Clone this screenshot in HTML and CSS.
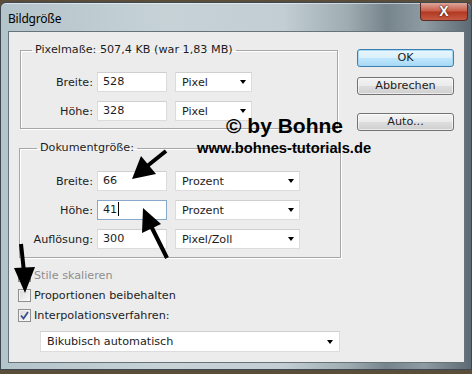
FILE: index.html
```html
<!DOCTYPE html>
<html lang="de">
<head>
<meta charset="UTF-8" />
<title>Bildgröße</title>
<link rel="stylesheet" href="styles.css">
</head>
<body>

<!-- Dialog window -->
<div class="window">
  <div class="titlebar">
    <span class="title">Bildgröße</span>
    <div class="close" aria-label="Schließen">X</div>
  </div>

  <div class="client">
    <div class="left">
      <fieldset class="group g1">
        <legend>Pixelmaße: 507,4 KB (war 1,83 MB)</legend>
        <div class="row">
          <span class="label">Breite:</span>
          <div class="field">528</div>
          <div class="select s-short"><span>Pixel</span><span class="caret"></span></div>
        </div>
        <div class="row">
          <span class="label">Höhe:</span>
          <div class="field">328</div>
          <div class="select s-short"><span>Pixel</span><span class="caret"></span></div>
        </div>
      </fieldset>

      <fieldset class="group g2">
        <legend>Dokumentgröße:</legend>
        <div class="row">
          <span class="label">Breite:</span>
          <div class="field">66</div>
          <div class="select s-long"><span>Prozent</span><span class="caret"></span></div>
        </div>
        <div class="row">
          <span class="label">Höhe:</span>
          <div class="field focus">41<span class="cursor"></span></div>
          <div class="select s-long"><span>Prozent</span><span class="caret"></span></div>
        </div>
        <div class="row">
          <span class="label">Auflösung:</span>
          <div class="field">300</div>
          <div class="select s-long"><span>Pixel/Zoll</span><span class="caret"></span></div>
        </div>
      </fieldset>

      <div class="checks">
        <div class="check disabled"><span class="box"></span>Stile skalieren</div>
        <div class="check"><span class="box"></span>Proportionen beibehalten</div>
        <div class="check"><span class="box checked">
          <svg width="11" height="11" viewBox="0 0 11 11"><path d="M2 5.5 L4.5 8.5 L9 2" fill="none" stroke="#3a4f8f" stroke-width="1.8"/></svg>
        </span>Interpolationsverfahren:</div>
      </div>

      <div class="select s-wide"><span>Bikubisch automatisch</span><span class="caret"></span></div>
    </div>

    <div class="buttons">
      <div class="btn default">OK</div>
      <div class="btn">Abbrechen</div>
      <div class="btn auto">Auto...</div>
    </div>
  </div>
</div>

<!-- Watermark and arrows over the dialog -->
<div class="mark-big">© by Bohne</div>
<div class="mark-url">www.bohnes-tutorials.de</div>
<svg class="arrows" width="472" height="374" viewBox="0 0 472 374">
  <line x1="166" y1="151" x2="146" y2="167" stroke="#000" stroke-width="4"/>
  <polygon points="132,179 141,156 156,174" fill="#000"/>
  <line x1="167" y1="258" x2="151" y2="226" stroke="#000" stroke-width="4"/>
  <polygon points="143,208 161,224 142,233" fill="#000"/>
  <line x1="21" y1="244" x2="24" y2="272" stroke="#000" stroke-width="4"/>
  <polygon points="25,293 14,268 35,267" fill="#000"/>
</svg>

</body>
</html>
```

FILE: styles.css
```css
* { box-sizing: border-box; }
body {
  margin: 0;
  width: 472px;
  height: 374px;
  overflow: hidden;
  position: relative;
  background: #5a4e3a;
  font-family: 'DejaVu Sans', Tahoma, sans-serif;
  font-size: 11.2px;
  color: #1c1c1c;
}

/* Window frame */
.window {
  margin-top: 2px;
  width: 472px;
  height: 368px;
  padding: 0 6px 6px 7px;
  border: 1px solid #3d4750;
  border-radius: 6px 6px 0 0;
  display: flex;
  flex-direction: column;
  background: linear-gradient(90deg, #b4c4cb 0%, #c6d2d6 35%, #c2ced3 60%, #9eabb1 74%, #76848c 82%, #8e9ba2 90%, #5d6a73 100%);
  box-shadow: inset 0 1px 0 rgba(255,255,255,0.5);
}
.titlebar {
  height: 28px;
  display: flex;
  justify-content: space-between;
  align-items: flex-start;
  margin-right: -3px;
}
.title {
  font-family: 'Noto Sans', sans-serif;
  font-size: 12px;
  color: #000;
  margin-top: 7px;
  letter-spacing: -0.2px;
}
.close {
  width: 48px;
  height: 18px;
  border: 1px solid #5b2a22;
  border-top: none;
  border-radius: 0 0 4px 4px;
  background: linear-gradient(#dca79b 0%, #c9604c 45%, #b23a24 55%, #c65a44 100%);
  color: #fff;
  font-family: 'Liberation Sans', sans-serif;
  font-weight: bold;
  font-size: 14px;
  line-height: 17px;
  text-align: center;
  text-shadow: 0 0 2px #3b1008, 0 0 1px #3b1008;
}

/* Client area */
.client {
  flex: 1;
  display: flex;
  align-items: flex-start;
  padding: 11px 0 0 11px;
  background: #ececec;
  border: 1px solid #66737b;
}
.left {
  width: 320px;
}

.group {
  margin: 0;
  padding: 15px 0 7px 0;
  border: 1px solid #a7a7a7;
  box-shadow: 1px 1px 0 #fff, inset 1px 1px 0 #fff;
  min-inline-size: 0;
}
.group legend {
  padding: 0 3px;
  margin-left: 11px;
  line-height: 14px;
}
.g1 { width: 318px; }
.g2 {
  width: 322px;
  margin: 12px 0 0 -1px;
  padding: 16px 0 8px 1px;
}
.g2 legend { margin-left: 16px; }

.row {
  display: flex;
  align-items: center;
  height: 20px;
}
.row + .row { margin-top: 9px; }
.label {
  width: 72px;
  margin-right: 4px;
  text-align: right;
}
.field {
  width: 70px;
  height: 20px;
  margin-right: 8px;
  padding-left: 5px;
  line-height: 18px;
  background: #fff;
  border: 1px solid #dcdcdc;
  border-top-color: #cfcfcf;
}
.field.focus { border-color: #88a9cc; }
.cursor {
  display: inline-block;
  width: 1px;
  height: 14px;
  margin-left: 1px;
  vertical-align: -3px;
  background: #000;
}
.select {
  height: 20px;
  display: flex;
  justify-content: space-between;
  align-items: center;
  padding: 0 5px 0 6px;
  background: #fff;
  border: 1px solid #dcdcdc;
  border-top-color: #cfcfcf;
}
.caret {
  width: 0;
  height: 0;
  border-left: 3.5px solid transparent;
  border-right: 3.5px solid transparent;
  border-top: 4px solid #000;
}
.s-short { width: 77px; }
.s-long { width: 125px; }
.s-wide {
  width: 300px;
  height: 21px;
  margin: 6px 0 0 20px;
  padding-right: 6px;
}

/* Check boxes */
.checks { margin: 7px 0 0 -2px; }
.check {
  display: flex;
  align-items: center;
  height: 20px;
}
.check.disabled { color: #8e8e8e; }
.box {
  width: 13px;
  height: 13px;
  margin-right: 3px;
  border: 1px solid #8f8f8f;
  background: linear-gradient(135deg, #d9d9d9, #fafafa);
  box-shadow: inset 0 0 0 1px #f4f4f4;
  display: flex;
  align-items: center;
  justify-content: center;
}
.box svg { display: block; }

/* Buttons */
.buttons {
  margin: 6px 0 0 17px;
  width: 97px;
  display: flex;
  flex-direction: column;
}
.btn {
  height: 18px;
  line-height: 16px;
  text-align: center;
  border: 1px solid #737373;
  border-radius: 3px;
  background: linear-gradient(#f3f3f3 0%, #ebebeb 48%, #dddddd 52%, #cfcfcf 100%);
  box-shadow: inset 0 0 0 1px rgba(255,255,255,0.6);
}
.btn + .btn { margin-top: 10px; }
.btn.auto { margin-top: 18px; }
.btn.default {
  border-color: #3c7fb1;
  box-shadow: inset 0 0 0 1px #a6d8f4;
  background: linear-gradient(#eaf6fd 0%, #d9f0fc 48%, #bee6fd 52%, #a7d9f5 100%);
}

/* Watermark overlay */
.mark-big, .mark-url {
  position: absolute;
  font-family: 'Liberation Sans', Arial, sans-serif;
  font-weight: bold;
  color: #000;
  line-height: 1;
  white-space: nowrap;
}
.mark-big {
  left: 226px;
  top: 115px;
  font-size: 21px;
}
.mark-url {
  left: 197px;
  top: 141px;
  font-size: 14.7px;
}
.arrows {
  position: absolute;
  left: 0;
  top: 0;
  pointer-events: none;
}
```
